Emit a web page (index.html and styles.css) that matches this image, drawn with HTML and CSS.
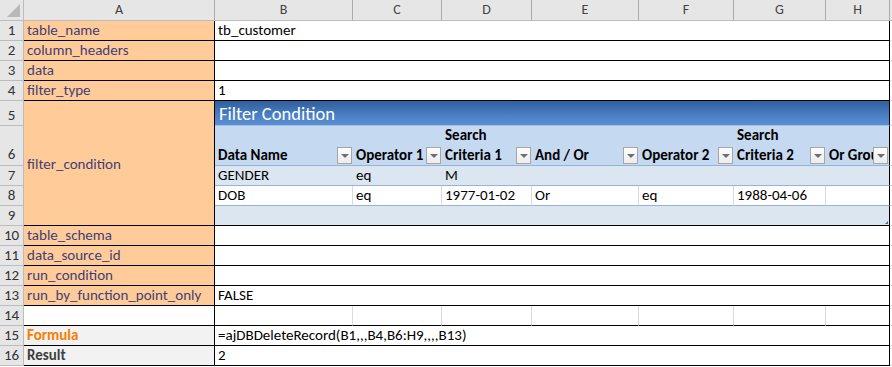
FILE: index.html
```html
<!DOCTYPE html>
<html lang="en">
<head>
    <meta charset="UTF-8">
    <title>ajDBDeleteRecord</title>
    <link rel="stylesheet" href="styles.css">
</head>
<body>
    <div class="sheet">
        <!-- column headers -->
        <div class="corner"></div>
        <div class="col-head">A</div>
        <div class="col-head">B</div>
        <div class="col-head">C</div>
        <div class="col-head">D</div>
        <div class="col-head">E</div>
        <div class="col-head">F</div>
        <div class="col-head">G</div>
        <div class="col-head">H</div>
        <div class="col-head col-rest"></div>

        <!-- 1-4 -->
        <div class="row-head">1</div>
        <div class="cell input">table_name</div>
        <div class="cell value">tb_customer</div>
        <div class="cell rest"></div>

        <div class="row-head">2</div>
        <div class="cell input">column_headers</div>
        <div class="cell value"></div>
        <div class="cell rest"></div>

        <div class="row-head">3</div>
        <div class="cell input">data</div>
        <div class="cell value"></div>
        <div class="cell rest"></div>

        <div class="row-head">4</div>
        <div class="cell input">filter_type</div>
        <div class="cell value">1</div>
        <div class="cell rest"></div>

        <!-- 5-9 filter table -->
        <div class="row-head">5</div>
        <div class="cell input merged">filter_condition</div>
        <div class="cell tbl-title">Filter Condition</div>
        <div class="cell rest"></div>

        <div class="row-head row-tall">6</div>
        <div class="cell th">Data Name<span class="dd"></span></div>
        <div class="cell th">Operator 1<span class="dd"></span></div>
        <div class="cell th">Search<br>Criteria 1<span class="dd"></span></div>
        <div class="cell th">And / Or<span class="dd"></span></div>
        <div class="cell th">Operator 2<span class="dd"></span></div>
        <div class="cell th">Search<br>Criteria 2<span class="dd"></span></div>
        <div class="cell th last">Or Group<span class="dd"></span></div>
        <div class="cell rest"></div>

        <div class="row-head">7</div>
        <div class="cell td band">GENDER</div>
        <div class="cell td band">eq</div>
        <div class="cell td band">M</div>
        <div class="cell td band"></div>
        <div class="cell td band"></div>
        <div class="cell td band"></div>
        <div class="cell td band last"></div>
        <div class="cell rest"></div>

        <div class="row-head">8</div>
        <div class="cell td grid">DOB</div>
        <div class="cell td grid">eq</div>
        <div class="cell td grid">1977-01-02</div>
        <div class="cell td grid">Or</div>
        <div class="cell td grid">eq</div>
        <div class="cell td grid">1988-04-06</div>
        <div class="cell td last"></div>
        <div class="cell rest"></div>

        <div class="row-head">9</div>
        <div class="cell td band end"></div>
        <div class="cell td band end"></div>
        <div class="cell td band end"></div>
        <div class="cell td band end"></div>
        <div class="cell td band end"></div>
        <div class="cell td band end"></div>
        <div class="cell td band end last"><span class="handle"></span></div>
        <div class="cell rest"></div>

        <!-- 10-16 -->
        <div class="row-head">10</div>
        <div class="cell input">table_schema</div>
        <div class="cell value"></div>
        <div class="cell rest"></div>

        <div class="row-head">11</div>
        <div class="cell input">data_source_id</div>
        <div class="cell value"></div>
        <div class="cell rest"></div>

        <div class="row-head">12</div>
        <div class="cell input">run_condition</div>
        <div class="cell value"></div>
        <div class="cell rest"></div>

        <div class="row-head">13</div>
        <div class="cell input">run_by_function_point_only</div>
        <div class="cell value">FALSE</div>
        <div class="cell rest"></div>

        <div class="row-head">14</div>
        <div class="cell blank"></div>
        <div class="cell gridline"></div>
        <div class="cell gridline"></div>
        <div class="cell gridline"></div>
        <div class="cell gridline"></div>
        <div class="cell gridline"></div>
        <div class="cell gridline"></div>
        <div class="cell gridline last"></div>
        <div class="cell rest"></div>

        <div class="row-head">15</div>
        <div class="cell calc">Formula</div>
        <div class="cell value">=ajDBDeleteRecord(B1,,,B4,B6:H9,,,,B13)</div>
        <div class="cell rest"></div>

        <div class="row-head">16</div>
        <div class="cell output">Result</div>
        <div class="cell value">2</div>
        <div class="cell rest"></div>
    </div>
</body>
</html>
```

FILE: styles.css
```css
body {
    margin: 0;
    background: #ffffff;
    font-family: Calibri, Carlito, Lato, "Liberation Sans", sans-serif;
    font-size: 15px;
    overflow: hidden;
}
.sheet {
    display: grid;
    grid-template-columns: 24px 191px 138px 89px 90px 107px 95px 92px 64px 2px;
    grid-template-rows: 21px 20px 20px 20px 20px 25px 40px 20px 20px 20px 20px 20px 20px 20px 20px 20px 20px;
}
.corner {
    position: relative;
    background: #e6e6e6;
    border-right: 1px solid #bcbcbc;
    border-bottom: 1px solid #bcbcbc;
    box-sizing: border-box;
}
.corner::after {
    content: "";
    position: absolute;
    right: 3px;
    bottom: 3px;
    border-left: 13px solid transparent;
    border-bottom: 13px solid #b8b8b8;
}
.col-head {
    background: #e6e6e6;
    color: #444;
    font-size: 14px;
    text-align: center;
    line-height: 20px;
    border-right: 1px solid #ababab;
    border-bottom: 1px solid #bcbcbc;
    box-sizing: border-box;
}
.col-rest {
    border-right: none;
}
.row-head {
    background: #e6e6e6;
    color: #333;
    text-align: center;
    line-height: 18px;
    border-right: 1px solid #bcbcbc;
    border-bottom: 1px solid #bcbcbc;
    box-sizing: border-box;
    display: flex;
    align-items: flex-end;
    justify-content: center;
    padding-bottom: 1px;
}
.row-tall {
    padding-bottom: 2px;
}
.cell {
    box-sizing: border-box;
    display: flex;
    align-items: flex-end;
    padding: 0 3px 1px 3px;
    line-height: 18px;
    white-space: nowrap;
    overflow: hidden;
    border-bottom: 1px solid #000;
}
.input {
    background: #ffcc99;
    color: #3f3f76;
    border-right: 1px solid #000;
}
.merged {
    grid-row: span 5;
    align-items: center;
    padding-bottom: 0;
    padding-top: 2px;
}
.value {
    grid-column: span 7;
    color: #000;
    border-right: 1px solid #000;
}
.rest {
    border-bottom: 1px solid #e0e0e0;
    padding: 0;
}
.blank {
    border-right: 1px solid #000;
}
.gridline {
    border-right: 1px solid #dadada;
}
.calc {
    background: #f2f2f2;
    color: #fa7d00;
    font-weight: bold;
    border-right: 1px solid #000;
}
.output {
    background: #f2f2f2;
    color: #3f3f3f;
    font-weight: bold;
    border-right: 1px solid #000;
}
.last {
    border-right: 1px solid #000;
}

/* filter table */
.tbl-title {
    grid-column: span 7;
    background: linear-gradient(#2f5f9e 0%, #4a7fc4 60%, #5a90d6 100%);
    color: #fff;
    font-size: 18.5px;
    line-height: 22px;
    padding-left: 4px;
    padding-bottom: 0;
    border-right: 1px solid #000;
    border-bottom: 1px solid #a9bfd9;
}
.th {
    position: relative;
    background: #c5d9f1;
    color: #000;
    font-weight: bold;
    line-height: 20px;
    padding-bottom: 0;
    border-bottom: 1px solid #95b3d7;
}
.th.last {
    border-right: 1px solid #000;
}
.dd {
    position: absolute;
    right: 1px;
    bottom: 1px;
    width: 15px;
    height: 17px;
    box-sizing: border-box;
    border: 1px solid #a6a6a6;
    background: linear-gradient(#fdfdfd, #ececec);
}
.dd::after {
    content: "";
    position: absolute;
    left: 3px;
    top: 6px;
    border-left: 4px solid transparent;
    border-right: 4px solid transparent;
    border-top: 4px solid #6e6e6e;
}
.td {
    color: #000;
    border-bottom: 1px solid #95b3d7;
}
.band {
    background: #dce6f1;
}
.grid {
    border-right: 1px solid #d9d9d9;
}
.td.last {
    border-right: 1px solid #000;
}
.td.end {
    border-bottom: 1px solid #000;
}
.td.end.last {
    position: relative;
    overflow: visible;
}
.handle {
    position: absolute;
    right: 1px;
    bottom: 1px;
    border-left: 3px solid transparent;
    border-bottom: 3px solid #3a6cb4;
}
```
